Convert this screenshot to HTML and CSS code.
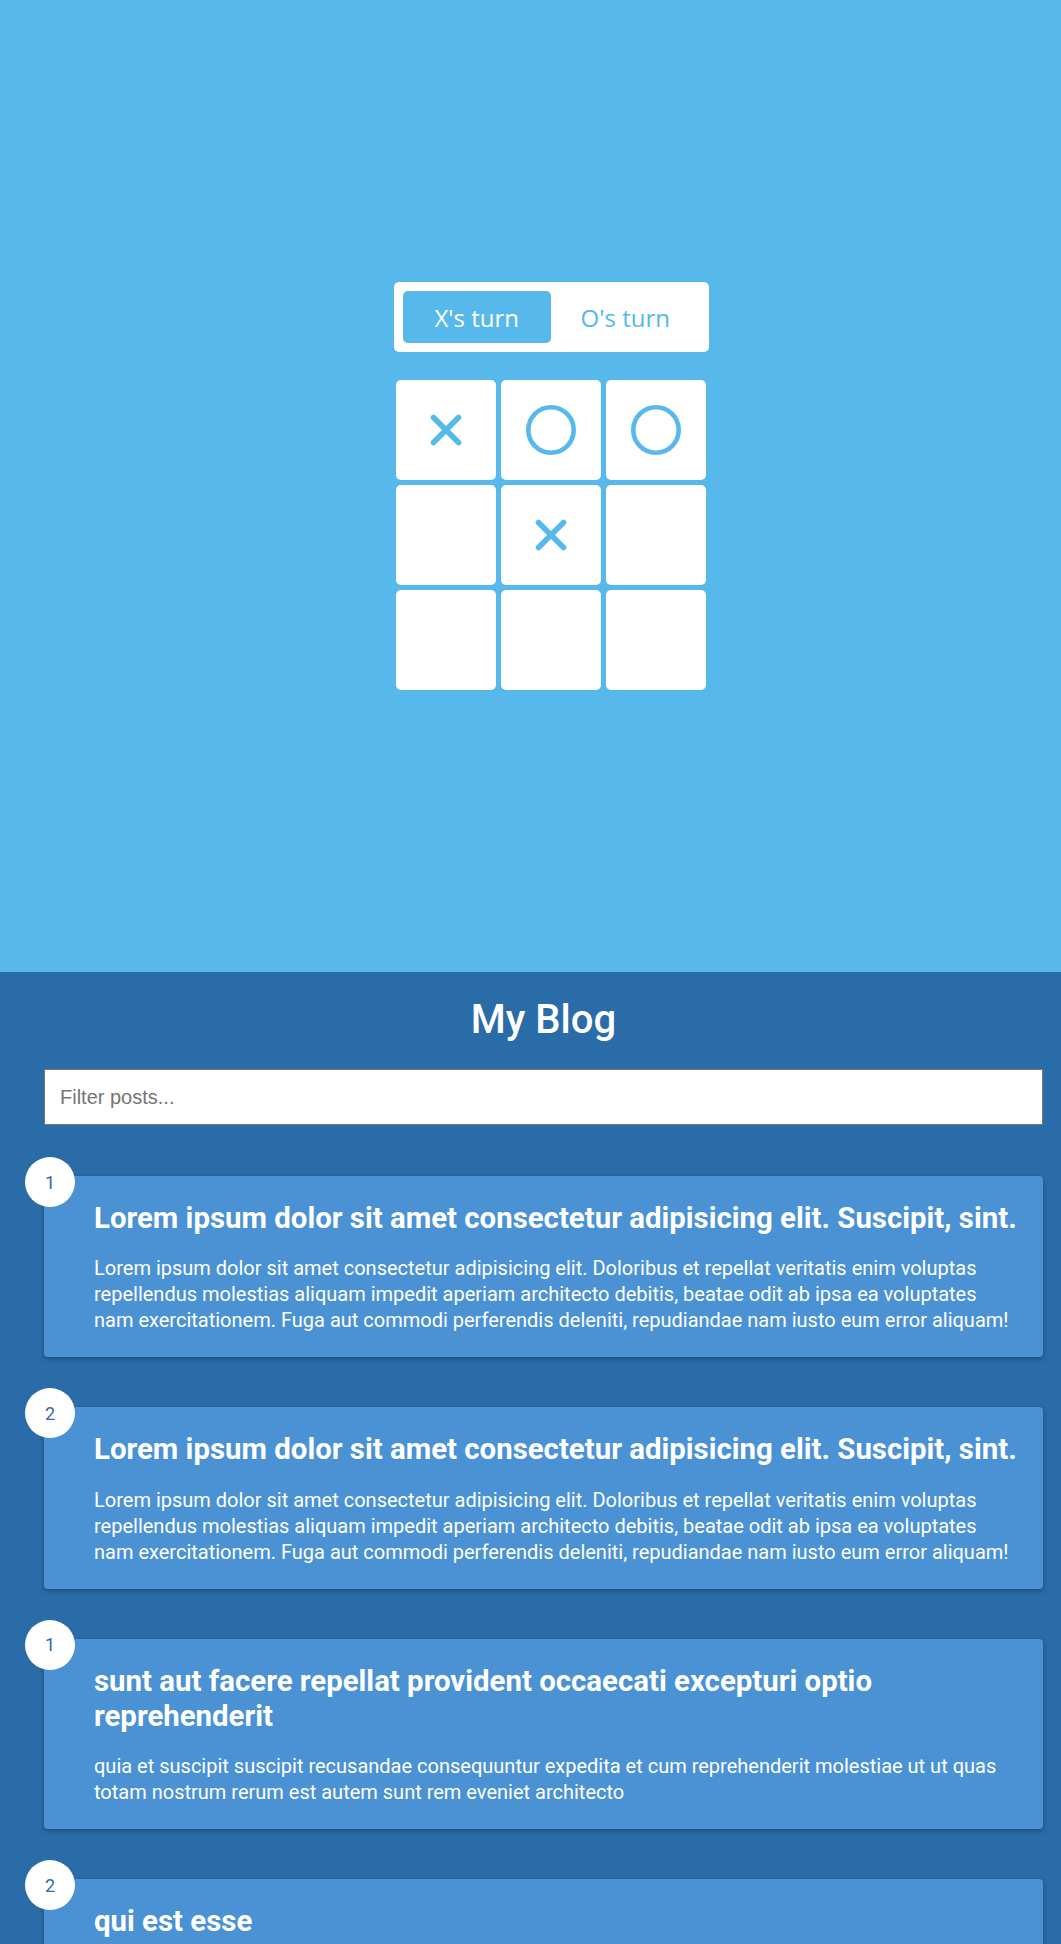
FILE: index.html
```html
<!DOCTYPE html>
<html lang="en">
<head>
<meta charset="utf-8">
<title>Tic Tac Toe &amp; Blog</title>
<link rel="stylesheet" href="styles.css">
</head>
<body>
<section class="game">
  <div class="game-inner">
    <div class="turns">
      <button class="turn active">X's turn</button>
      <button class="turn">O's turn</button>
    </div>
    <div class="board">
      <div class="cell"><svg class="mark-x" width="32" height="32" viewBox="0 0 32 32"><path d="M3.5 3.5 L28.5 28.5 M28.5 3.5 L3.5 28.5"/></svg></div>
      <div class="cell"><svg class="mark-o" width="50" height="50" viewBox="0 0 50 50"><circle cx="25" cy="25" r="22.7"/></svg></div>
      <div class="cell"><svg class="mark-o" width="50" height="50" viewBox="0 0 50 50"><circle cx="25" cy="25" r="22.7"/></svg></div>
      <div class="cell"></div>
      <div class="cell"><svg class="mark-x" width="32" height="32" viewBox="0 0 32 32"><path d="M3.5 3.5 L28.5 28.5 M28.5 3.5 L3.5 28.5"/></svg></div>
      <div class="cell"></div>
      <div class="cell"></div>
      <div class="cell"></div>
      <div class="cell"></div>
    </div>
  </div>
</section>
<section class="blog">
  <h1 class="blog-title">My Blog</h1>
  <input class="filter" type="text" placeholder="Filter posts...">
  <div class="posts">
    <article class="post">
      <span class="post-num">1</span>
      <h2 class="post-title">Lorem ipsum dolor sit amet consectetur adipisicing elit. Suscipit, sint.</h2>
      <p class="post-body">Lorem ipsum dolor sit amet consectetur adipisicing elit. Doloribus et repellat veritatis enim voluptas repellendus molestias aliquam impedit aperiam architecto debitis, beatae odit ab ipsa ea voluptates nam exercitationem. Fuga aut commodi perferendis deleniti, repudiandae nam iusto eum error aliquam!</p>
    </article>
    <article class="post">
      <span class="post-num">2</span>
      <h2 class="post-title">Lorem ipsum dolor sit amet consectetur adipisicing elit. Suscipit, sint.</h2>
      <p class="post-body">Lorem ipsum dolor sit amet consectetur adipisicing elit. Doloribus et repellat veritatis enim voluptas repellendus molestias aliquam impedit aperiam architecto debitis, beatae odit ab ipsa ea voluptates nam exercitationem. Fuga aut commodi perferendis deleniti, repudiandae nam iusto eum error aliquam!</p>
    </article>
    <article class="post">
      <span class="post-num">1</span>
      <h2 class="post-title">sunt aut facere repellat provident occaecati excepturi optio reprehenderit</h2>
      <p class="post-body">quia et suscipit suscipit recusandae consequuntur expedita et cum reprehenderit molestiae ut ut quas totam nostrum rerum est autem sunt rem eveniet architecto</p>
    </article>
    <article class="post">
      <span class="post-num">2</span>
      <h2 class="post-title">qui est esse</h2>
      <p class="post-body">est rerum tempore vitae sequi sint nihil reprehenderit dolor beatae ea dolores neque fugiat blanditiis voluptate porro vel nihil molestiae ut reiciendis qui aperiam non debitis possimus qui neque nisi nulla</p>
    </article>
  </div>
</section>
</body>
</html>
```

FILE: styles.css
```css
html, body {
  margin: 0;
  padding: 0;
}

body {
  font-family: Roboto, "Noto Sans", "Liberation Sans", sans-serif;
  background: #2a6ca7;
}

/* ---------- Game ---------- */
.game {
  box-sizing: border-box;
  height: 972px;
  background: #56b8eb;
  display: flex;
  align-items: center;
  justify-content: center;
  padding-left: 41px;
}

.game-inner {
  display: flex;
  flex-direction: column;
  align-items: center;
  gap: 28px;
}

.turns {
  display: flex;
  background: #fff;
  border-radius: 5px;
  padding: 9px 9px;
}

.turn {
  width: 148.5px;
  height: 52px;
  border: 0;
  border-radius: 5px;
  background: transparent;
  color: #56b8eb;
  font-family: "Open Sans", "Noto Sans", sans-serif;
  font-size: 24px;
  font-weight: 400;
  padding: 0;
  cursor: pointer;
}

.turn.active {
  background: #56b8eb;
  color: #fff;
}

.board {
  display: grid;
  grid-template-columns: repeat(3, 100px);
  grid-auto-rows: 100px;
  gap: 5px;
}

.cell {
  background: #fff;
  border-radius: 5px;
  display: flex;
  align-items: center;
  justify-content: center;
}

.mark-x path {
  stroke: #56b8eb;
  stroke-width: 5.6;
  stroke-linecap: round;
  fill: none;
}

.mark-o circle {
  stroke: #56b8eb;
  stroke-width: 4.6;
  fill: none;
}

/* ---------- Blog ---------- */
.blog {
  background: #2a6ca7;
  padding: 0 18px 60px 44px;
}

.blog-title {
  margin: 0;
  padding: 24px 0 26px;
  text-align: center;
  color: #fff;
  font-size: 40px;
  font-weight: 500;
  line-height: normal;
}

.filter {
  display: block;
  width: 100%;
  box-sizing: border-box;
  height: 56px;
  margin: 0;
  border: 1px solid #767676;
  border-radius: 0;
  padding: 0 15px;
  font-family: "Liberation Sans", Arial, sans-serif;
  font-size: 20px;
  color: #333;
  background: #fff;
}

.filter::placeholder {
  color: #757575;
}

.posts {
  display: flex;
  flex-direction: column;
  gap: 50px;
  margin-top: 51px;
}

.post {
  position: relative;
  background: #4a92d4;
  border-radius: 4px;
  box-shadow: 0 2px 5px rgba(0, 0, 0, 0.3);
  padding: 25px 24px 24px 50px;
  color: #fff;
}

.post-num {
  position: absolute;
  top: -19px;
  left: -19px;
  width: 50px;
  height: 50px;
  border-radius: 50%;
  background: #fff;
  color: #2e6ba8;
  display: flex;
  align-items: center;
  justify-content: center;
  font-size: 18px;
}

.post-title {
  margin: 0 0 19px;
  font-size: 29.4px;
  font-weight: 700;
  line-height: 1.2;
}

.post-body {
  margin: 0 4px 0 0;
  font-size: 20px;
  line-height: 26px;
}
```
